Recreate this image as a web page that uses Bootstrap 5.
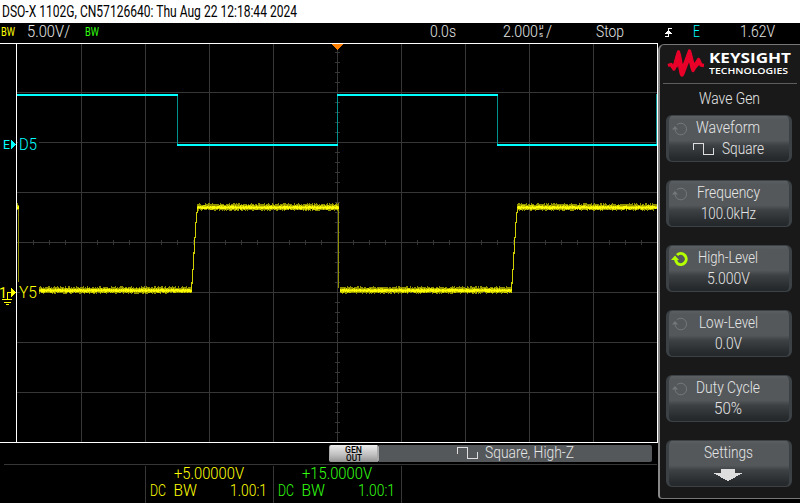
<!DOCTYPE html>
<html lang="en">
<head>
<meta charset="utf-8">
<meta name="viewport" content="width=device-width, initial-scale=1">
<title>DSO-X 1102G</title>
<link href="https://cdn.jsdelivr.net/npm/bootstrap@5.3.0/dist/css/bootstrap.min.css" rel="stylesheet">
<style>
body{width:800px;height:503px;background:#000;color:#e6e6e6;font-family:Roboto,"Liberation Sans",sans-serif;font-weight:300;font-size:16.5px;line-height:20px}
svg{display:block;flex:none}
.crisp{shape-rendering:crispEdges}
.fit{display:inline-block;white-space:nowrap;transform-origin:0 50%}
.yel{color:#ff0}.grn{color:#3f1}.cyn{color:#0ff}
.titlebar{height:23px;padding:2px 0 0 2px;background:#fff;color:#000;font-weight:400}
.status{height:20px;padding:0 0 0 1px;display:grid;grid-template-columns:26px 58px 345px 73px 93px 68px 29px 47px 1fr;line-height:18px}
.tiny{font-size:12.5px;font-weight:400}
.usec{width:6px;font-size:8px;line-height:8px;margin:0 1px 0 1px;font-weight:400}
.left-side{width:658px}
.scope{height:400px}
.scope text{font-size:16.5px;font-weight:300}
.scope .mark-e{font-size:13.5px;font-weight:400}
.scope .mark-1{font-size:15px;font-weight:400}
.genrow{height:21px;padding:2px 6px 0 329px}
.gen-key{width:50px;height:17px;border-radius:2px;background:linear-gradient(#ededed,#bdbdbd 60%,#939393);border:solid #aaa;border-width:0 2px 0 1px;color:#000;font-size:9px;font-weight:500;line-height:8px;padding-top:1px}
.gen-info{height:17px;background:#54585b;border-radius:0 2px 2px 0;padding:0 0 0 78px;line-height:16px}
.gen-info svg{margin:2px 7px 0 0}
.chan{margin-left:4px;width:653px;height:39px;border-top:1px solid #363636;padding:1px 0 0 141px}
.chan-box{width:128px;height:37px;border-left:1px solid #363636;padding:0 6px 0 4px;line-height:17px}
.chan-value{padding-left:1px;line-height:16px}
.side{width:142px;height:455px;margin-top:1px;background:#191919;border-left:2px solid #888;border-top:1px solid #777;border-bottom:1px solid #777;border-top-left-radius:6px;border-bottom-left-radius:4px}
.brand{height:39px;margin:0 3px;border-bottom:1px solid #5d5d5d;padding:3px 0 0 4px;color:#fff}
.brand-names{padding:2px 0 0 5px}
.brand-a{font:700 14.6px/15px "Open Sans",sans-serif}
.brand-b{font:600 9.4px/11px "Open Sans",sans-serif}
.menu-name{height:31px;padding:5px 2px 0 0}
.keys{padding:0 8px 0 6px;gap:18px}
.key{height:47px;border:solid #3b4145;border-width:1px 3px;border-radius:6px;background:linear-gradient(#5b5f62 0,#54585b 8%,#54585b 54%,#3d4144 65%,#272b2e 92%,#24282b);padding:1px 2px 0 0;line-height:21px;position:relative}
.key .knob{position:absolute;left:2px;top:5px}
.down-arrow{margin:6px auto 0}
</style>
<script src="https://cdn.jsdelivr.net/npm/bootstrap@5.3.0/dist/js/bootstrap.bundle.min.js"></script>
</head>
<body class="m-0 overflow-hidden">
<svg width="0" height="0" class="position-absolute">
  <defs>
    <symbol id="knob" viewBox="0 0 18 16"><path d="M6 3.600A5.800 5.800 0 1 1 6.200 12.600Q4.600 11.200 4 8.500" fill="none" stroke="currentColor" stroke-width="1"/><path d="M1 8.500 4 5 7 8.500Z" fill="currentColor"/></symbol>
    <symbol id="knob-on" viewBox="0 0 18 16"><path d="M6 4A5.500 5.500 0 1 1 6.500 12.500Q5 11 4.500 8.500" fill="none" stroke="currentColor" stroke-width="3"/><path d="M0 9 4 4.500 8 9Z" fill="currentColor"/></symbol>
    <symbol id="sq" viewBox="0 0 21 12"><path d="M.5 7V.5H10.500V11.500H20.500V5" fill="none" stroke="#dedede"/></symbol>
  </defs>
</svg>

<header class="titlebar"><span class="fit" data-w="295">DSO-X 1102G, CN57126640: Thu Aug 22 12:18:44 2024</span></header>

<div class="status">
  <span class="tiny yel"><span class="fit" data-w="14">BW</span></span>
  <span><span class="fit" data-w="43">5.00V/</span></span>
  <span class="tiny grn"><span class="fit" data-w="14">BW</span></span>
  <span><span class="fit" data-w="26">0.0s</span></span>
  <span class="d-flex"><span class="fit" data-w="35">2.000</span><span class="usec d-flex flex-column align-items-start"><span>µ</span><span>s</span></span><span class="fit" data-w="6">/</span></span>
  <span><span class="fit" data-w="28">Stop</span></span>
  <span><svg class="crisp mt-1" width="10" height="11"><path d="M1 9.500H4.500V1.500H8M1 6.500H8" fill="none" stroke="#fff"/><path d="M1 6.500 4.500 3 8 6.500Z" fill="#fff"/></svg></span>
  <span class="cyn"><span class="fit" data-w="7">E</span></span>
  <span><span class="fit" data-w="35">1.62V</span></span>
</div>

<div class="d-flex">
  <main class="left-side flex-shrink-0">
    <svg class="scope" width="658" height="400" viewBox="0 43 658 400">
      <g class="crisp">
        <path id="grid" fill="none" stroke="#363636"/>
        <path d="M0 43.500H657.500V442.500H0M16.500 43V442" fill="none" stroke="#fff"/>
        <path d="M331 44H343L337.500 50Z" fill="#ff8000"/>
        <path d="M17 95H178M177 145H338M337 95H498M497 145H657" stroke="#0ff" stroke-width="2"/>
        <path d="M177.500 96V144M337.500 96V144M497.500 96V144M656.500 94V144" stroke="#009090"/>
        <path id="dim" fill="none" stroke="#8f8f00"/>
        <path id="mid" fill="none" stroke="#d0d000"/>
        <path id="core" fill="none" stroke="#ff0"/>
        <path d="M11 139V150L16 144.500Z" fill="#0ff"/>
        <path d="M18 135H39V154H18ZM20 283H39V301H20Z" fill="#000"/>
        <path d="M7.500 299V292.500H12M2 299.500H12M4 302.500H11M6 304.500H9" fill="none" stroke="#ff0"/>
        <path d="M11 287V298L16 292.500Z" fill="#ff0"/>
      </g>
      <g fill="#0ff"><text class="mark-e" x="3" y="149" textLength="7" lengthAdjust="spacingAndGlyphs">E</text><text x="19" y="149.500" textLength="18" lengthAdjust="spacingAndGlyphs">D5</text></g>
      <g fill="#ff0"><text class="mark-1" x="-1" y="297.500" textLength="8" lengthAdjust="spacingAndGlyphs">1</text><text x="19" y="297.500" textLength="18" lengthAdjust="spacingAndGlyphs">Y5</text></g>
    </svg>
    <div class="genrow d-flex">
      <div class="gen-key d-flex flex-column align-items-center flex-shrink-0"><span class="fit" data-w="17">GEN</span><span class="fit" data-w="16">OUT</span></div>
      <div class="gen-info d-flex flex-grow-1"><svg class="crisp" width="21" height="12"><use href="#sq"/></svg><span class="fit" data-w="89">Square, High-Z</span></div>
    </div>
    <div class="chan d-flex">
      <div class="chan-box yel">
        <div class="text-center chan-value"><span class="fit" data-w="70">+5.00000V</span></div>
        <div class="d-flex"><span class="fit" data-w="16">DC</span><span class="fit ps-2" data-w="31">BW</span><span class="fit ms-auto" data-w="37">1.00:1</span></div>
      </div>
      <div class="chan-box grn">
        <div class="text-center chan-value"><span class="fit" data-w="70">+15.0000V</span></div>
        <div class="d-flex"><span class="fit" data-w="16">DC</span><span class="fit ps-2" data-w="31">BW</span><span class="fit ms-auto" data-w="37">1.00:1</span></div>
      </div>
      <div class="chan-box"></div>
    </div>
  </main>

  <aside class="side flex-shrink-0">
    <div class="brand d-flex">
      <svg width="37" height="31" viewBox="0 0 37 31"><g fill="none" stroke="#e90029" stroke-linejoin="round"><path d="M1 17.500 4 16.500 7 21 11.500 4 15 27 22.500 3 26 22.500 31.500 11.500 34 17 37 17.500" stroke-width="3.400"/><path d="M8 19 11.500 7 15 25.500 22.500 6 26 20 31.500 14" stroke-width="5"/></g></svg>
      <div class="brand-names d-flex flex-column align-items-start"><span class="fit brand-a" data-w="82">KEYSIGHT</span><span class="fit brand-b" data-w="79">TECHNOLOGIES</span></div>
    </div>
    <div class="menu-name text-center"><span class="fit" data-w="61">Wave Gen</span></div>
    <div class="keys d-flex flex-column text-center" id="keys"></div>
  </aside>
</div>

<script>
// Soft keys: label, label width, value, value width
const softkeys = [
  ['Waveform', 64, 'Square', 42], ['Frequency', 63, '100.0kHz', 55], ['High-Level', 60, '5.000V', 43],
  ['Low-Level', 59, '0.0V', 27], ['Duty Cycle', 64, '50%', 28], ['Settings', 49, '', 0]
];
document.getElementById('keys').innerHTML = softkeys.map(([a, aw, b, bw], i) => {
  const on = i === 2;
  const knob = i < 5 ? `<svg class="knob" width="18" height="16" color="${on ? '#b4ff00' : '#74787a'}"><use href="#${on ? 'knob-on' : 'knob'}"/></svg>` : '';
  const wave = i === 0 ? '<svg class="crisp me-2" width="21" height="12"><use href="#sq"/></svg>' : '';
  const value = b ? `<div class="d-flex justify-content-center align-items-center">${wave}<span class="fit" data-w="${bw}">${b}</span></div>`
    : '<svg class="crisp down-arrow" width="30" height="13"><path d="M8 0H22V4H30L15 12 0 4H8Z" fill="#dedede"/></svg>';
  return `<div class="key">${knob}<div><span class="fit" data-w="${aw}">${a}</span></div>${value}</div>`;
}).join('');

// Condense each label to its width on the instrument display
document.querySelectorAll('.fit').forEach(e => {
  const n = e.getBoundingClientRect().width, w = +e.dataset.w;
  e.style.transform = `scaleX(${w / n})`;
  if (e.classList.contains('ms-auto')) e.style.transformOrigin = '100% 50%';
  else e.style.marginRight = `${w - n}px`;
});

// Graticule
let g = '';
for (let x = 81; x < 657; x += 64) g += `M${x}.5 44V442`;
for (let y = 92; y < 442; y += 50) g += `M17 ${y}.5H657`;
for (let x = 33; x < 657; x += 16) g += `M${x}.5 240V245`;
for (let y = 52; y < 442; y += 10) g += `M335 ${y}.5H340`;
document.getElementById('grid').setAttribute('d', g);

// Analog trace with sampling noise
let seed = 7;
const rnd = () => (seed = (seed * 16807) % 2147483647) / 2147483647;
let dim = '', mid = '', core = '';
const band = (a, b, y) => {
  for (let x = a; x < b; x++) {
    const up = rnd() < .25 ? 4 : rnd() < .7 ? 3 : 2, dn = rnd() < .25 ? 4 : rnd() < .85 ? 3 : 2;
    dim += `M${x}.5 ${y - up}V${y + dn}`;
    mid += `M${x}.5 ${y - 1 - (rnd() < .35)}V${y + 2 + (rnd() < .35)}`;
    core += `M${x}.5 ${y - (rnd() < .5)}V${y + 1 + (rnd() < .6)}`;
  }
};
band(17, 19, 207); band(39, 192, 290); band(197, 339, 207); band(340, 512, 290); band(517, 657, 207);
dim += 'M18.5 208V282M338.5 208V288';
for (const x of [191, 511]) {
  [[290, 282], [284, 269], [270, 252], [254, 237], [238, 222], [223, 212], [213, 206]].forEach(([a, b], i) => {
    mid += `M${x + i}.5 ${a}V${b}`;
  });
}
document.getElementById('dim').setAttribute('d', dim);
document.getElementById('mid').setAttribute('d', mid);
document.getElementById('core').setAttribute('d', core);
</script>
</body>
</html>
